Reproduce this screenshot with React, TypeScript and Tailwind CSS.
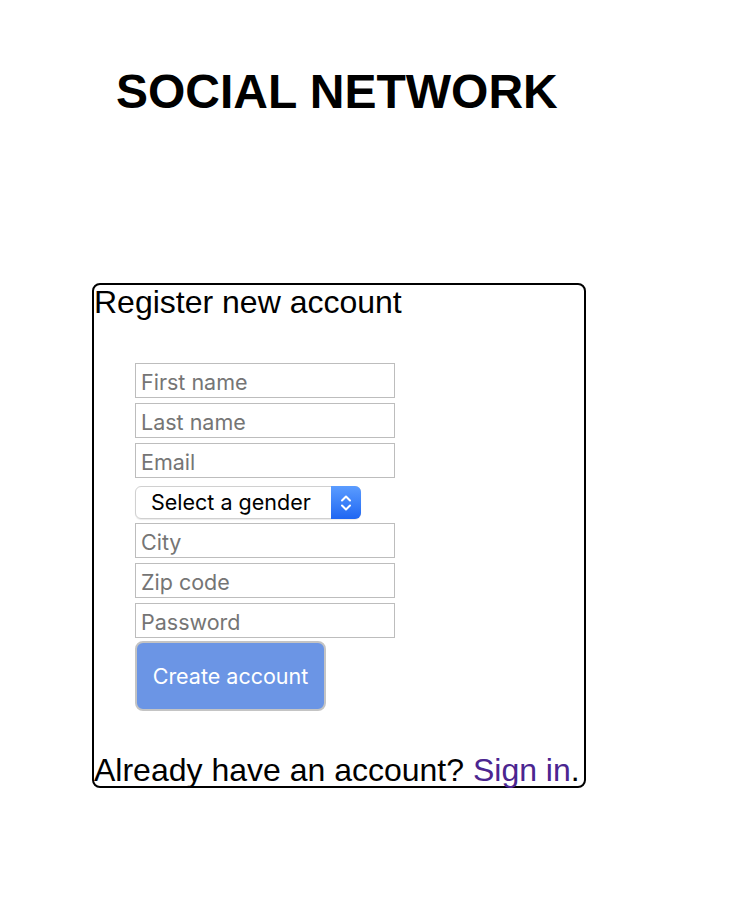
import React from 'react';

const fields = ['First name', 'Last name', 'Email'];
const fields2 = ['City', 'Zip code'];

export default function App() {
  const inputClass =
    "block w-[260px] h-[35px] border border-[#bdbdbd] bg-white px-[5px] pt-[2px] text-[21.5px] text-black placeholder:text-[#757575] outline-none font-['Inter',sans-serif]";

  return (
    <div className="min-h-[908px] bg-white text-black font-['Liberation_Sans',Arial,sans-serif]">
      <h1 className="pl-[116px] pt-[64px] text-[48px] font-bold leading-[55px]">SOCIAL NETWORK</h1>

      <div className="ml-[92px] mt-[164px] w-[494px] h-[505px] border-2 border-black rounded-[8px] flex flex-col">
        <h2 className="text-[32px] leading-[37px] mt-[-1px]">Register new account</h2>

        <form className="mt-[42px] ml-[41px] flex flex-col gap-[5px]" onSubmit={(e) => e.preventDefault()}>
          {fields.map((f) => (
            <input key={f} type="text" placeholder={f} className={inputClass} />
          ))}

          <div className="relative w-[226px] h-[33px] mt-[3px] mb-[-1px] rounded-[6px] border border-[#d0d0d0] bg-white shadow-[0_1px_1px_rgba(0,0,0,0.08)] flex items-center">
            <span className="pl-[15px] text-[21.5px] font-['Inter',sans-serif]">Select a gender</span>
            <div className="absolute right-[-1px] top-[-1px] bottom-[-1px] w-[30px] rounded-r-[6px] bg-gradient-to-b from-[#5b9cff] to-[#1f66f2] flex items-center justify-center">
              <svg width="12" height="20" viewBox="0 0 12 20" fill="none" stroke="white" strokeWidth="2" strokeLinecap="round" strokeLinejoin="round">
                <path d="M2 7.5 L6 3.5 L10 7.5" />
                <path d="M2 12.5 L6 16.5 L10 12.5" />
              </svg>
            </div>
          </div>

          {fields2.map((f) => (
            <input key={f} type="text" placeholder={f} className={inputClass} />
          ))}
          <input type="password" placeholder="Password" className={inputClass} />

          <button
            type="submit"
            className="mt-[-2px] w-[191px] h-[70px] rounded-[8px] border-2 border-[#c4c4c4] bg-[#6b95e5] text-white text-[21.5px] font-['Inter',sans-serif]"
          >
            Create account
          </button>
        </form>

        <p className="mt-auto text-[32px] leading-[37px] mb-[-3px]">
          Already have an account? <a href="#" className="text-[#4b2590]">Sign in</a>.
        </p>
      </div>
    </div>
  );
}
